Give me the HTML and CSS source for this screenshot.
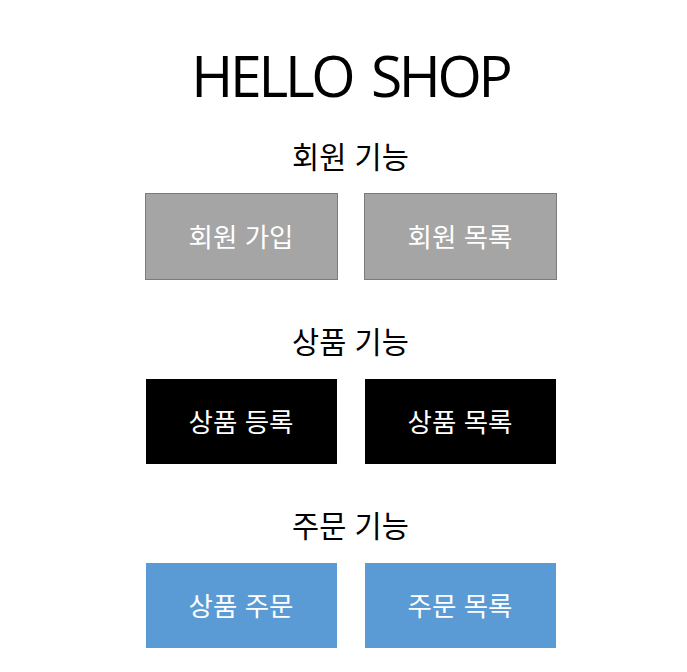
FILE: index.html
```html
<!DOCTYPE html>
<html lang="ko">
<head>
<meta charset="utf-8">
<title>HELLO SHOP</title>
<link rel="stylesheet" href="styles.css">
</head>
<body>
<main class="page">
  <h1 class="title">HELLO SHOP</h1>
  <section class="group">
    <h2 class="group-title">회원 기능</h2>
    <div class="buttons">
      <a class="btn btn-gray" href="#">회원 가입</a>
      <a class="btn btn-gray" href="#">회원 목록</a>
    </div>
  </section>
  <section class="group">
    <h2 class="group-title">상품 기능</h2>
    <div class="buttons">
      <a class="btn btn-black" href="#">상품 등록</a>
      <a class="btn btn-black" href="#">상품 목록</a>
    </div>
  </section>
  <section class="group">
    <h2 class="group-title">주문 기능</h2>
    <div class="buttons">
      <a class="btn btn-blue" href="#">상품 주문</a>
      <a class="btn btn-blue" href="#">주문 목록</a>
    </div>
  </section>
</main>
</body>
</html>
```

FILE: styles.css
```css
html, body {
  margin: 0;
  padding: 0;
  background: #ffffff;
}
body {
  font-family: "Noto Sans CJK KR", "Noto Sans", sans-serif;
  color: #000000;
}
.page {
  box-sizing: border-box;
  width: 100%;
  padding-left: 14px;
  display: flex;
  flex-direction: column;
  align-items: center;
}
.title {
  box-sizing: border-box;
  margin: 0;
  height: 133px;
  padding-top: 47px;
  font-family: "Open Sans", "Noto Sans", sans-serif;
  font-size: 57px;
  font-weight: 400;
  line-height: 57px;
  letter-spacing: -3.3px;
  word-spacing: 7px;
  text-align: center;
}
.group {
  display: flex;
  flex-direction: column;
  align-items: center;
}
.group + .group {
  margin-top: 39px;
}
.group:last-child {
  margin-top: 38px;
}
.group-title {
  margin: 0;
  height: 44px;
  font-size: 29.5px;
  font-weight: 400;
  line-height: 44px;
  text-align: center;
}
.buttons {
  display: flex;
  gap: 28px;
  margin-top: 17px;
}
.btn {
  width: 191px;
  height: 85px;
  display: flex;
  align-items: center;
  justify-content: center;
  text-decoration: none;
  color: #ffffff;
  font-size: 26.5px;
  line-height: 1;
}
.btn-gray {
  margin: -1px;
  background: #a5a5a5;
  border: 1px solid #7b7b7b;
}
.btn-black {
  background: #000000;
}
.btn-blue {
  background: #5b9bd5;
}
```
